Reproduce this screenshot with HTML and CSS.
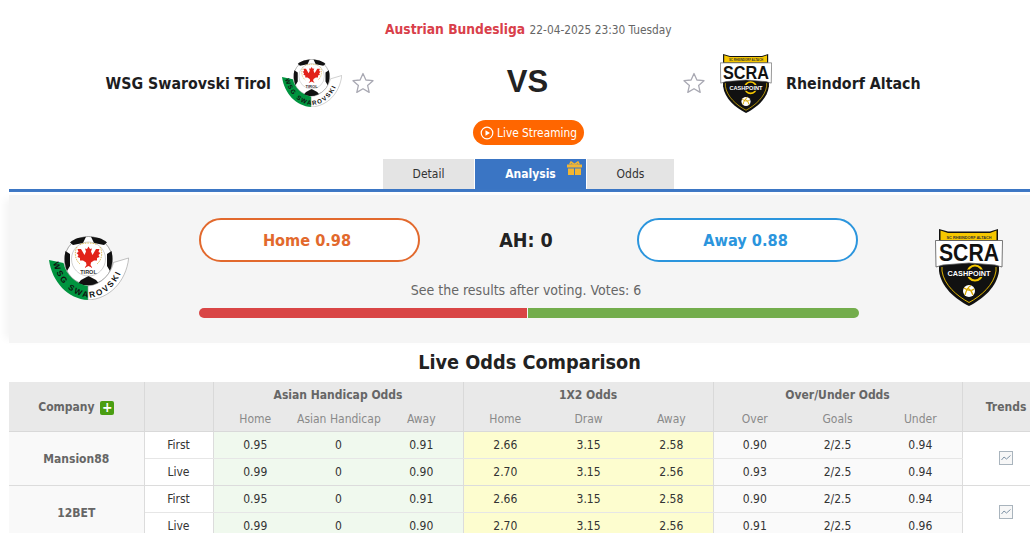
FILE: index.html
```html
<!DOCTYPE html>
<html lang="en">
<head>
<meta charset="utf-8">
<title>WSG Swarovski Tirol vs Rheindorf Altach</title>
<link rel="stylesheet" href="styles.css">
</head>
<body>
<svg class="defs" width="0" height="0" aria-hidden="true">
  <defs>
    <symbol id="logo-wsg" viewBox="0 0 80 64">
      <circle cx="39.500" cy="24.500" r="24" fill="#fff" stroke="#444" stroke-width=".5"/>
      <path fill="#111" d="M29 2 37 .8 34 7 24 9 21 6.500C23 4.500 26 3 29 2ZM50 2 42 .8 45 7 55 9 58 6.500C56 4.500 53 3 50 2ZM16.500 15 21 18 21 30 18 35C15.500 29 15 21 16.500 15ZM62.500 15 58 18 58 30 61 35C63.500 29 64 21 62.500 15ZM32 44 39.500 40 47 44 50 47.500C44 50 35 50 29 47.500Z"/>
      <circle cx="39.500" cy="23" r="17" fill="none" stroke="#888" stroke-width=".4"/>
      <path fill="none" stroke="#d9b44a" stroke-width=".9" stroke-dasharray="1.500 1" d="M28 11C25 16 26 24 31 28M51 11C54 16 53 24 48 28M31 8.500C36 6.500 43 6.500 48 8.500"/>
      <path fill="#e2231a" d="M39.500 10.500 41 13 43 12.500 42 15.500 43.500 19 47 13 50.500 13 49.500 16 51.500 17 49.500 19 50.500 21 48 22 48 24.500 45 24.500 42 26.500 41.500 29 43.500 32 39.500 30 35.500 32 37.500 29 37 26.500 34 24.500 31 24.500 31 22 28.500 21 29.500 19 27.500 17 29.500 16 28.500 13 32 13 35.500 19 37 15.500 36 12.500 38 13Z"/>
      <text class="logo-tirol" x="39.5" y="38" text-anchor="middle">TIROL</text>
      <path fill="#00943f" d="M0 24 14.500 27C17 39 27 48 39 50V64C19 63 3 46 0 24Z"/>
      <path fill="#fff" stroke="#999" stroke-width=".6" d="M39 64V50C52 49 62 38 64.500 26.500L79.700 22C77 46 60 63 39 64Z"/>
      <path id="arc-wsg" fill="none" d="M4 26C8.500 46 23 60.500 40 61.500C58 60.500 72 45 76.500 23"/>
      <text class="logo-arc"><textPath href="#arc-wsg" startOffset="1">WSG SWAROVSKI</textPath></text>
    </symbol>
    <symbol id="logo-scra" viewBox="0 0 68 77">
      <path fill="#111" d="M4 0 13 2.500H55L63 0 63 12H4Z"/>
      <path fill="#f6c700" d="M5.500 1.500 13 4H55L61.500 1.500V11H5.500Z"/>
      <text class="logo-club" x="34" y="9.500" text-anchor="middle">SC RHEINDORF ALTACH</text>
      <path fill="#111" d="M4 32H64V42C62 58 48 70 34 77 20 70 6 58 4 42Z"/>
      <path fill="none" stroke="#f6c700" stroke-width=".9" d="M7 38V42C9 56 22 67 34 73.500 46 67 59 56 61 42V38"/>
      <path fill="#fff" stroke="#555" stroke-width=".8" d="M.5 11.500H67.500L67 38 60 36 34 34 8 36 1 38Z"/>
      <text class="logo-scra-text" x="34" y="32" text-anchor="middle" textLength="60" lengthAdjust="spacingAndGlyphs">SCRA</text>
      <circle cx="40" cy="44" r="7.500" fill="none" stroke="#f6c700" stroke-width="2.200"/>
      <rect x="11" y="40.500" width="46" height="7.500" fill="#111"/>
      <text class="logo-cash" x="34" y="47" text-anchor="middle" textLength="43" lengthAdjust="spacingAndGlyphs">CASHPOINT</text>
      <circle cx="34" cy="62" r="6" fill="#fff"/>
      <path fill="none" stroke="#d9a900" stroke-width="1.300" d="M29 59C33 62 37 62 39 60M30 66C31 62 33 58 36 56.500M38 66C37 63 36 61 33 59"/>
    </symbol>
    <symbol id="star" viewBox="0 0 22 22">
      <path fill="#fff" stroke="#a9a9b3" stroke-width="1.300" stroke-linejoin="round" d="M11 1.500 13.900 8 21 8.700 15.600 13.400 17.200 20.400 11 16.700 4.800 20.400 6.400 13.400 1 8.700 8.100 8Z"/>
    </symbol>
    <symbol id="trend" viewBox="0 0 14 14">
      <rect x=".5" y=".5" width="13" height="13" fill="#f7f7f7" stroke="#a9b4bd"/>
      <path fill="none" stroke="#7f93a6" d="M2.500 9 5 6 7.500 8 11.500 4.500"/>
    </symbol>
  </defs>
</svg>

<div class="page">
  <header class="match">
    <p class="league"><span class="league-name">Austrian Bundesliga</span> <span class="league-date">22-04-2025 23:30 Tuesday</span></p>
    <div class="teams">
      <div class="team team-home">
        <span class="team-name">WSG Swarovski Tirol</span>
        <svg class="logo-small-wsg"><use href="#logo-wsg"/></svg>
        <svg class="star"><use href="#star"/></svg>
      </div>
      <div class="versus">VS</div>
      <div class="team team-away">
        <svg class="star"><use href="#star"/></svg>
        <svg class="logo-small-scra"><use href="#logo-scra"/></svg>
        <span class="team-name">Rheindorf Altach</span>
      </div>
    </div>
    <div class="stream-row">
      <a class="stream" href="#">
        <svg class="play" viewBox="0 0 14 14"><circle cx="7" cy="7" r="5.800" fill="none" stroke="#fff" stroke-width="1.200"/><path fill="#fff" d="M5.500 4.200 10 7 5.500 9.800Z"/></svg>
        Live Streaming
      </a>
    </div>
    <nav class="tabs">
      <a class="tab tab-detail" href="#">Detail</a>
      <a class="tab tab-active" href="#">Analysis
        <svg class="gift" viewBox="0 0 15 14"><path fill="#f2b632" d="M0 3.500H15V6.500H0ZM1 7.500H7V14H1ZM8 7.500H14V14H8Z"/><path fill="none" stroke="#f2b632" stroke-width="1.300" d="M7.500 3.200 4 .8 3 2.800 7.500 3.200 12 2.800 11 .8Z"/></svg>
      </a>
      <a class="tab tab-odds" href="#">Odds</a>
    </nav>
  </header>

  <section class="vote">
    <svg class="logo-big-wsg"><use href="#logo-wsg"/></svg>
    <div class="vote-main">
      <div class="vote-buttons">
        <button class="vote-btn vote-home">Home 0.98</button>
        <div class="vote-ah">AH: 0</div>
        <button class="vote-btn vote-away">Away 0.88</button>
      </div>
      <p class="vote-note">See the results after voting. Votes: 6</p>
      <div class="vote-bar"><span class="bar-home"></span><span class="bar-away"></span></div>
    </div>
    <svg class="logo-big-scra"><use href="#logo-scra"/></svg>
  </section>

  <h2 class="title">Live Odds Comparison</h2>

  <table class="odds">
    <colgroup>
      <col class="c-company"><col class="c-type">
      <col class="c-mid"><col class="c-odd"><col class="c-odd">
      <col class="c-mid"><col class="c-odd"><col class="c-odd">
      <col class="c-odd"><col class="c-odd"><col class="c-odd">
      <col class="c-trend">
    </colgroup>
    <thead>
      <tr class="head-top">
        <th rowspan="2" class="th-main th-span">Company <span class="plus">+</span></th>
        <th rowspan="2"></th>
        <th colspan="3" class="th-main">Asian Handicap Odds</th>
        <th colspan="3" class="th-main">1X2 Odds</th>
        <th colspan="3" class="th-main">Over/Under Odds</th>
        <th rowspan="2" class="th-main th-span">Trends</th>
      </tr>
      <tr class="head-sub">
        <th class="sub-left">Home</th><th class="sub-mid">Asian Handicap</th><th class="sub-right">Away</th>
        <th class="sub-left">Home</th><th class="sub-mid">Draw</th><th class="sub-right">Away</th>
        <th class="sub-left">Over</th><th class="sub-mid">Goals</th><th class="sub-right">Under</th>
      </tr>
    </thead>
    <tbody>
      <tr>
        <td rowspan="2" class="company">Mansion88</td><td class="type">First</td>
        <td class="ah">0.95</td><td class="ah">0</td><td class="ah end">0.91</td>
        <td class="x12">2.66</td><td class="x12">3.15</td><td class="x12 end">2.58</td>
        <td class="ou">0.90</td><td class="ou">2/2.5</td><td class="ou end">0.94</td>
        <td rowspan="2" class="trend"><svg class="trend-icon"><use href="#trend"/></svg></td>
      </tr>
      <tr class="group-end">
        <td class="type">Live</td>
        <td class="ah">0.99</td><td class="ah">0</td><td class="ah end">0.90</td>
        <td class="x12">2.70</td><td class="x12">3.15</td><td class="x12 end">2.56</td>
        <td class="ou">0.93</td><td class="ou">2/2.5</td><td class="ou end">0.94</td>
      </tr>
      <tr>
        <td rowspan="2" class="company">12BET</td><td class="type">First</td>
        <td class="ah">0.95</td><td class="ah">0</td><td class="ah end">0.91</td>
        <td class="x12">2.66</td><td class="x12">3.15</td><td class="x12 end">2.58</td>
        <td class="ou">0.90</td><td class="ou">2/2.5</td><td class="ou end">0.94</td>
        <td rowspan="2" class="trend"><svg class="trend-icon"><use href="#trend"/></svg></td>
      </tr>
      <tr class="group-end">
        <td class="type">Live</td>
        <td class="ah">0.99</td><td class="ah">0</td><td class="ah end">0.90</td>
        <td class="x12">2.70</td><td class="x12">3.15</td><td class="x12 end">2.56</td>
        <td class="ou">0.91</td><td class="ou">2/2.5</td><td class="ou end">0.96</td>
      </tr>
    </tbody>
  </table>
</div>
</body>
</html>
```
FILE: styles.css
```css
html, body {
  margin: 0;
  padding: 0;
  overflow: hidden;
  background: #fff;
}
body {
  font-family: "DejaVu Sans Condensed", "DejaVu Sans", sans-serif;
  font-size: 12px;
  color: #333;
  height: 533px;
}
.defs { position: absolute; }
.page {
  width: 1042px;
  margin-left: 9px;
}

/* match header */
.match { padding-top: 20px; }
.league {
  margin: 0 0 0 376px;
  height: 18px;
  line-height: 18px;
  white-space: nowrap;
}
.league-name { font-size: 13.700px; font-weight: 700; color: #d9404a; }
.league-date { font-size: 11.800px; color: #666; margin-left: 1px; }

.teams {
  display: flex;
  align-items: center;
  height: 60px;
  margin-top: 15px;
}
.team { display: flex; align-items: center; }
.team-home { width: 365px; justify-content: flex-end; }
.team-name { font-size: 15.800px; font-weight: 700; color: #1d1d1f; white-space: nowrap; }
.versus {
  width: 309px;
  padding: 0 2px 2px 0;
  box-sizing: border-box;
  text-align: center;
  font-family: "Liberation Sans", sans-serif;
  font-size: 31px;
  font-weight: 700;
  color: #222;
}
.star { width: 22px; height: 22px; flex: none; }
.logo-small-wsg { width: 60px; height: 48px; margin: 0 10px 0 11px; flex: none; }
.logo-small-scra { width: 52px; height: 59px; margin: 0 14px 0 15px; flex: none; }
.logo-tirol { font: 700 5.500px "Liberation Sans", sans-serif; fill: #333; }
.logo-arc { font: 700 8.200px "Liberation Sans", sans-serif; fill: #111; letter-spacing: 1.900px; }
.logo-club { font: 700 3.800px "Liberation Sans", sans-serif; fill: #333; }
.logo-scra-text { font: 700 24px "Liberation Sans", sans-serif; fill: #111; }
.logo-cash { font: 700 7.600px "Liberation Sans", sans-serif; fill: #fff; }

.stream-row { display: flex; margin-top: 7px; padding-left: 464px; }
.stream {
  display: flex;
  align-items: center;
  justify-content: center;
  gap: 3px;
  width: 111px;
  height: 25px;
  border-radius: 12.500px;
  background: #ff6600;
  color: #fff;
  font-size: 11.800px;
  text-decoration: none;
}
.play { width: 14px; height: 14px; flex: none; }

.tabs {
  display: flex;
  height: 30px;
  margin-top: 14px;
  padding-left: 374px;
  border-bottom: 3px solid #3a75c4;
}
.tab {
  position: relative;
  display: flex;
  align-items: center;
  justify-content: center;
  background: #e4e4e4;
  color: #333;
  font-size: 12px;
  text-decoration: none;
}
.tab-detail { width: 91px; margin-right: 1px; }
.tab-active { width: 111px; margin-right: 1px; background: #3a75c4; color: #fff; font-weight: 700; }
.tab-odds { width: 87px; }
.gift { position: absolute; top: 2px; right: 4px; width: 15px; height: 14px; }

/* vote panel */
.vote {
  position: relative;
  display: flex;
  align-items: flex-start;
  height: 148px;
  margin-top: 3px;
  background: #f5f5f5;
  box-shadow: -8px 0 8px -4px #f4f4f4;
}
.logo-big-wsg { width: 80px; height: 64px; margin: 41px 0 0 40px; flex: none; }
.logo-big-scra { width: 68px; height: 77px; margin: 34px 0 0 76px; flex: none; }
.vote-main { width: 660px; margin: 23px 0 0 70px; flex: none; }
.vote-buttons { display: flex; align-items: center; justify-content: space-between; padding-right: 1px; }
.vote-btn {
  width: 221px;
  height: 44px;
  padding: 0 5px 0 0;
  border-radius: 22px;
  border: 2px solid;
  background: #fff;
  font-family: inherit;
  font-size: 16.200px;
  font-weight: 700;
}
.vote-home { color: #e2692d; border-color: #e2692d; }
.vote-away { color: #2b95dd; border-color: #2b95dd; padding-right: 4px; }
.vote-ah {
  font-size: 19.500px;
  font-weight: 700;
  color: #222;
  padding-right: 5px;
}
.vote-note {
  margin: 19px 0 0;
  height: 18px;
  line-height: 18px;
  text-align: center;
  font-size: 14px;
  color: #666;
  padding-right: 6px;
}
.vote-bar { display: flex; gap: 1px; height: 10px; margin-top: 9px; }
.bar-home { flex: 328; background: #d94545; border-radius: 5px 0 0 5px; }
.bar-away { flex: 331; background: #73ad4c; border-radius: 0 5px 5px 0; }

/* odds table */
.title {
  margin: 8px 0 0;
  height: 24px;
  line-height: 24px;
  text-align: center;
  padding-right: 1px;
  font-size: 19.700px;
  font-weight: 700;
  color: #222;
}
.odds {
  table-layout: fixed;
  border-collapse: collapse;
  width: 1041px;
  margin-top: 7px;
}
.c-company { width: 135px; }
.c-type { width: 69px; }
.c-odd { width: 83px; }
.c-mid { width: 84px; }
.c-trend { width: 88px; }
.odds th, .odds td {
  padding: 0;
  text-align: center;
  font-size: 12px;
  font-weight: 400;
  box-sizing: border-box;
  white-space: nowrap;
}
.odds thead th { background: #e9e9e9; color: #666; border-right: 1px solid #d9d9d9; }
.head-top { height: 25px; }
.head-sub { height: 24px; }
.odds th.th-main { font-weight: 700; color: #666; }
.odds th.th-span { padding-top: 2px; }
.odds .head-sub th { color: #8a8a8a; border-right: 0; border-bottom: 1px solid #d9d9d9; }
.odds .head-sub th.sub-right { border-right: 1px solid #d9d9d9; }
.odds .head-top th { border-bottom: 1px solid #d9d9d9; }
.odds .head-top th[colspan] { border-bottom: 0; }
.odds tbody tr { height: 27px; }
.odds tbody td { border-bottom: 1px solid #e6e6e6; color: #333; }
.odds td.company { padding-top: 2px; background: #f9f9f9; font-weight: 700; color: #666; border-right: 1px solid #dcdcdc; border-bottom-color: #dcdcdc; }
.odds td.type { background: #fff; border-right: 1px solid #dcdcdc; }
.odds td.ah { background: #f0f9ee; }
.odds td.x12 { background: #fdfdcf; }
.odds td.ou { background: #fafafa; }
.odds td.end { border-right: 1px solid #dcdcdc; }
.odds td.trend { background: #fff; border-bottom-color: #dcdcdc; }
.odds .group-end td { border-bottom-color: #dcdcdc; }
.plus {
  display: inline-block;
  width: 14px;
  height: 14px;
  margin-left: 2px;
  border-radius: 2px;
  background: #4a9e12;
  color: #fff;
  font-size: 14px;
  line-height: 13px;
  font-weight: 700;
  vertical-align: -1px;
}
.trend-icon { display: block; width: 14px; height: 14px; margin: 0 auto; }
```
